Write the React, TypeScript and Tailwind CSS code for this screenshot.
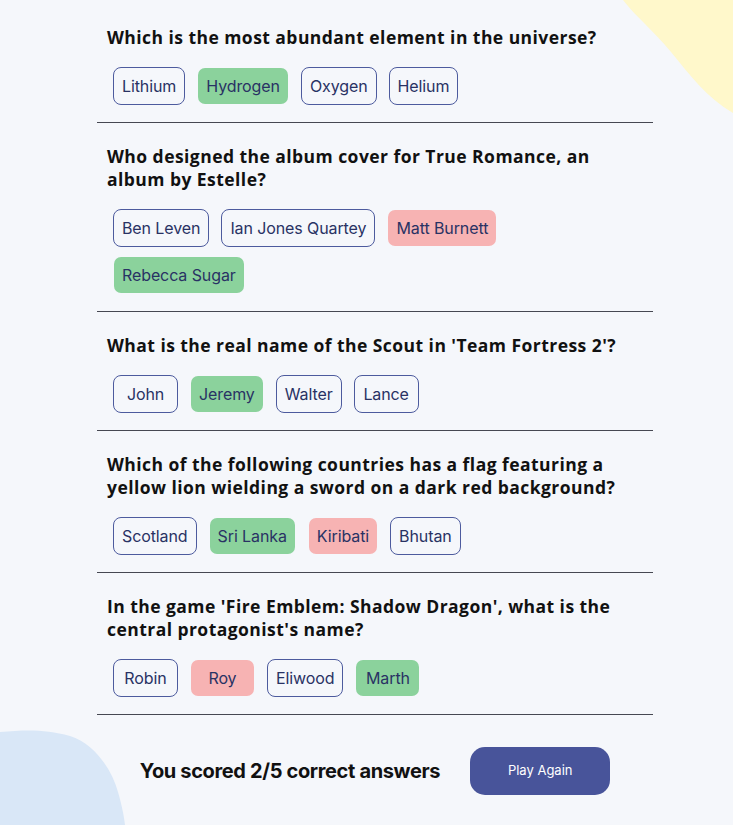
import React from "react";

type Answer = { text: string; state: "none" | "correct" | "wrong" };

const questions: { q: string; answers: Answer[] }[] = [
  {
    q: "Which is the most abundant element in the universe?",
    answers: [
      { text: "Lithium", state: "none" },
      { text: "Hydrogen", state: "correct" },
      { text: "Oxygen", state: "none" },
      { text: "Helium", state: "none" },
    ],
  },
  {
    q: "Who designed the album cover for True Romance, an album by Estelle?",
    answers: [
      { text: "Ben Leven", state: "none" },
      { text: "Ian Jones Quartey", state: "none" },
      { text: "Matt Burnett", state: "wrong" },
      { text: "Rebecca Sugar", state: "correct" },
    ],
  },
  {
    q: "What is the real name of the Scout in 'Team Fortress 2'?",
    answers: [
      { text: "John", state: "none" },
      { text: "Jeremy", state: "correct" },
      { text: "Walter", state: "none" },
      { text: "Lance", state: "none" },
    ],
  },
  {
    q: "Which of the following countries has a flag featuring a yellow lion wielding a sword on a dark red background?",
    answers: [
      { text: "Scotland", state: "none" },
      { text: "Sri Lanka", state: "correct" },
      { text: "Kiribati", state: "wrong" },
      { text: "Bhutan", state: "none" },
    ],
  },
  {
    q: "In the game 'Fire Emblem: Shadow Dragon', what is the central protagonist's name?",
    answers: [
      { text: "Robin", state: "none" },
      { text: "Roy", state: "wrong" },
      { text: "Eliwood", state: "none" },
      { text: "Marth", state: "correct" },
    ],
  },
];

function AnswerPill({ answer }: { answer: Answer }) {
  const look =
    answer.state === "correct"
      ? "border-transparent bg-[#8bd29c] bg-clip-padding"
      : answer.state === "wrong"
        ? "border-transparent bg-[#f7b3b3] bg-clip-padding"
        : "border-[#4d5b9e] bg-transparent";
  return (
    <button
      className={`min-w-[65px] rounded-lg border px-[8px] py-[8px] text-center font-['Inter',sans-serif] text-[16px] leading-[20px] tracking-[-0.1px] text-[#293264] ${look}`}
    >
      {answer.text}
    </button>
  );
}

export default function App() {
  return (
    <div className="relative min-h-[825px] w-full overflow-hidden bg-[#f5f7fb]">
      {/* decorative blobs */}
      <svg className="pointer-events-none absolute right-0 top-0" width="110" height="114" viewBox="0 0 110 114">
        <path d="M0 0 C 14 18, 30 30, 48 52 C 66 74, 84 98, 110 113 L 110 0 Z" fill="#fff8cb" />
      </svg>
      <svg className="pointer-events-none absolute bottom-0 left-0" width="126" height="95" viewBox="0 0 126 95">
        <path d="M0 2 C 25 0, 45 -1, 70 6 C 95 14, 112 40, 118 62 C 122 76, 124 86, 125 95 L 0 95 Z" fill="#d9e7f7" />
      </svg>

      <div className="relative ml-[97px] flex w-[556px] flex-col pt-[4px]">
        {questions.map((item, i) => (
          <section key={i} className="flex flex-col border-b border-[#464852] pb-[17px] pt-[22px]">
            <h2 className="pl-[10px] pr-[34px] font-['Open_Sans',sans-serif] text-[17.5px] font-bold leading-[23px] tracking-[0.45px] text-[#111]">
              {item.q}
            </h2>
            <div className="mt-[18px] flex flex-wrap items-center gap-x-3 gap-y-[9px] px-4">
              {item.answers.map((a) => (
                <AnswerPill key={a.text} answer={a} />
              ))}
            </div>
          </section>
        ))}

        <div className="flex items-center justify-center gap-[30px] pt-[32px]">
          <p className="font-['Inter',sans-serif] text-[20px] font-bold tracking-[-0.35px] text-[#111]">
            You scored 2/5 correct answers
          </p>
          <button className="h-[48px] w-[140px] rounded-[15px] bg-[#48549a] font-['Inter',sans-serif] text-[13px] text-white">
            Play Again
          </button>
        </div>
      </div>
    </div>
  );
}
